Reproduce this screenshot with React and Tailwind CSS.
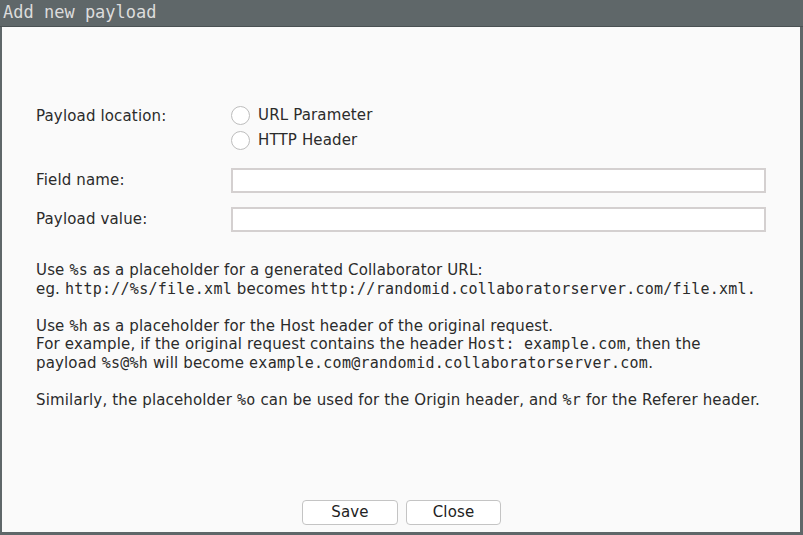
const sans = "font-['DejaVu_Sans',sans-serif]";
const mono = "font-['DejaVu_Sans_Mono',monospace] text-[15px] tracking-[0.25px]";

function Radio({ label }) {
  return (
    <label className="flex h-[25px] items-center gap-[8px]">
      <span className="h-[19px] w-[19px] rounded-full border border-[#bdbdbd] bg-white" />
      <span>{label}</span>
    </label>
  );
}

function Field({ label }) {
  return (
    <div className="flex items-center">
      <span className="w-[195px]">{label}</span>
      <div className="h-[25px] flex-1 border-2 border-[#d4d0d0] bg-white" />
    </div>
  );
}

function Code({ children }) {
  return <span className={mono}>{children}</span>;
}

export default function App() {
  return (
    <div className={`flex h-[535px] w-[803px] flex-col bg-[#5f6769] ${sans}`}>
      {/* title bar */}
      <div className="flex h-[27px] shrink-0 items-center border-b border-[#4a5153] px-[3px] font-['DejaVu_Sans_Mono',monospace] text-[17px] text-[#dcdcdc]">
        Add new payload
      </div>

      <div className="mb-[3px] ml-[2px] mr-[3px] flex flex-1 flex-col bg-[#fafafa] pl-[34px] pr-[34px] pt-[76px] text-[15px] tracking-[0.15px] text-[#2b2b2b]">
        <div className="flex">
          <span className="w-[195px] pt-[2px]">Payload location:</span>
          <div className="flex flex-col">
            <Radio label="URL Parameter" />
            <Radio label="HTTP Header" />
          </div>
        </div>

        <div className="mt-[15px] flex flex-col gap-[14px]">
          <Field label="Field name:" />
          <Field label="Payload value:" />
        </div>

        <div className="mt-[29px] leading-[18.6px]">
          <p>Use <Code>%s</Code> as a placeholder for a generated Collaborator URL:</p>
          <p>eg. <Code>http://%s/file.xml</Code> becomes <Code>http://randomid.collaboratorserver.com/file.xml.</Code></p>
          <p>&nbsp;</p>
          <p>Use <Code>%h</Code> as a placeholder for the Host header of the original request.</p>
          <p>For example, if the original request contains the header <Code>Host: example.com</Code>, then the</p>
          <p>payload <Code>%s@%h</Code> will become <Code>example.com@randomid.collaboratorserver.com</Code>.</p>
          <p>&nbsp;</p>
          <p>Similarly, the placeholder <Code>%o</Code> can be used for the Origin header, and <Code>%r</Code> for the Referer header.</p>
        </div>

        <div className="mt-auto mb-[7px] flex justify-center gap-[8px] pl-[1px]">
          <button className="h-[25px] w-[96px] rounded-[4px] border border-[#c4c4c4] bg-white text-[15px] text-[#222]">Save</button>
          <button className="h-[25px] w-[95px] rounded-[4px] border border-[#c4c4c4] bg-white text-[15px] text-[#222]">Close</button>
        </div>
      </div>
    </div>
  );
}
